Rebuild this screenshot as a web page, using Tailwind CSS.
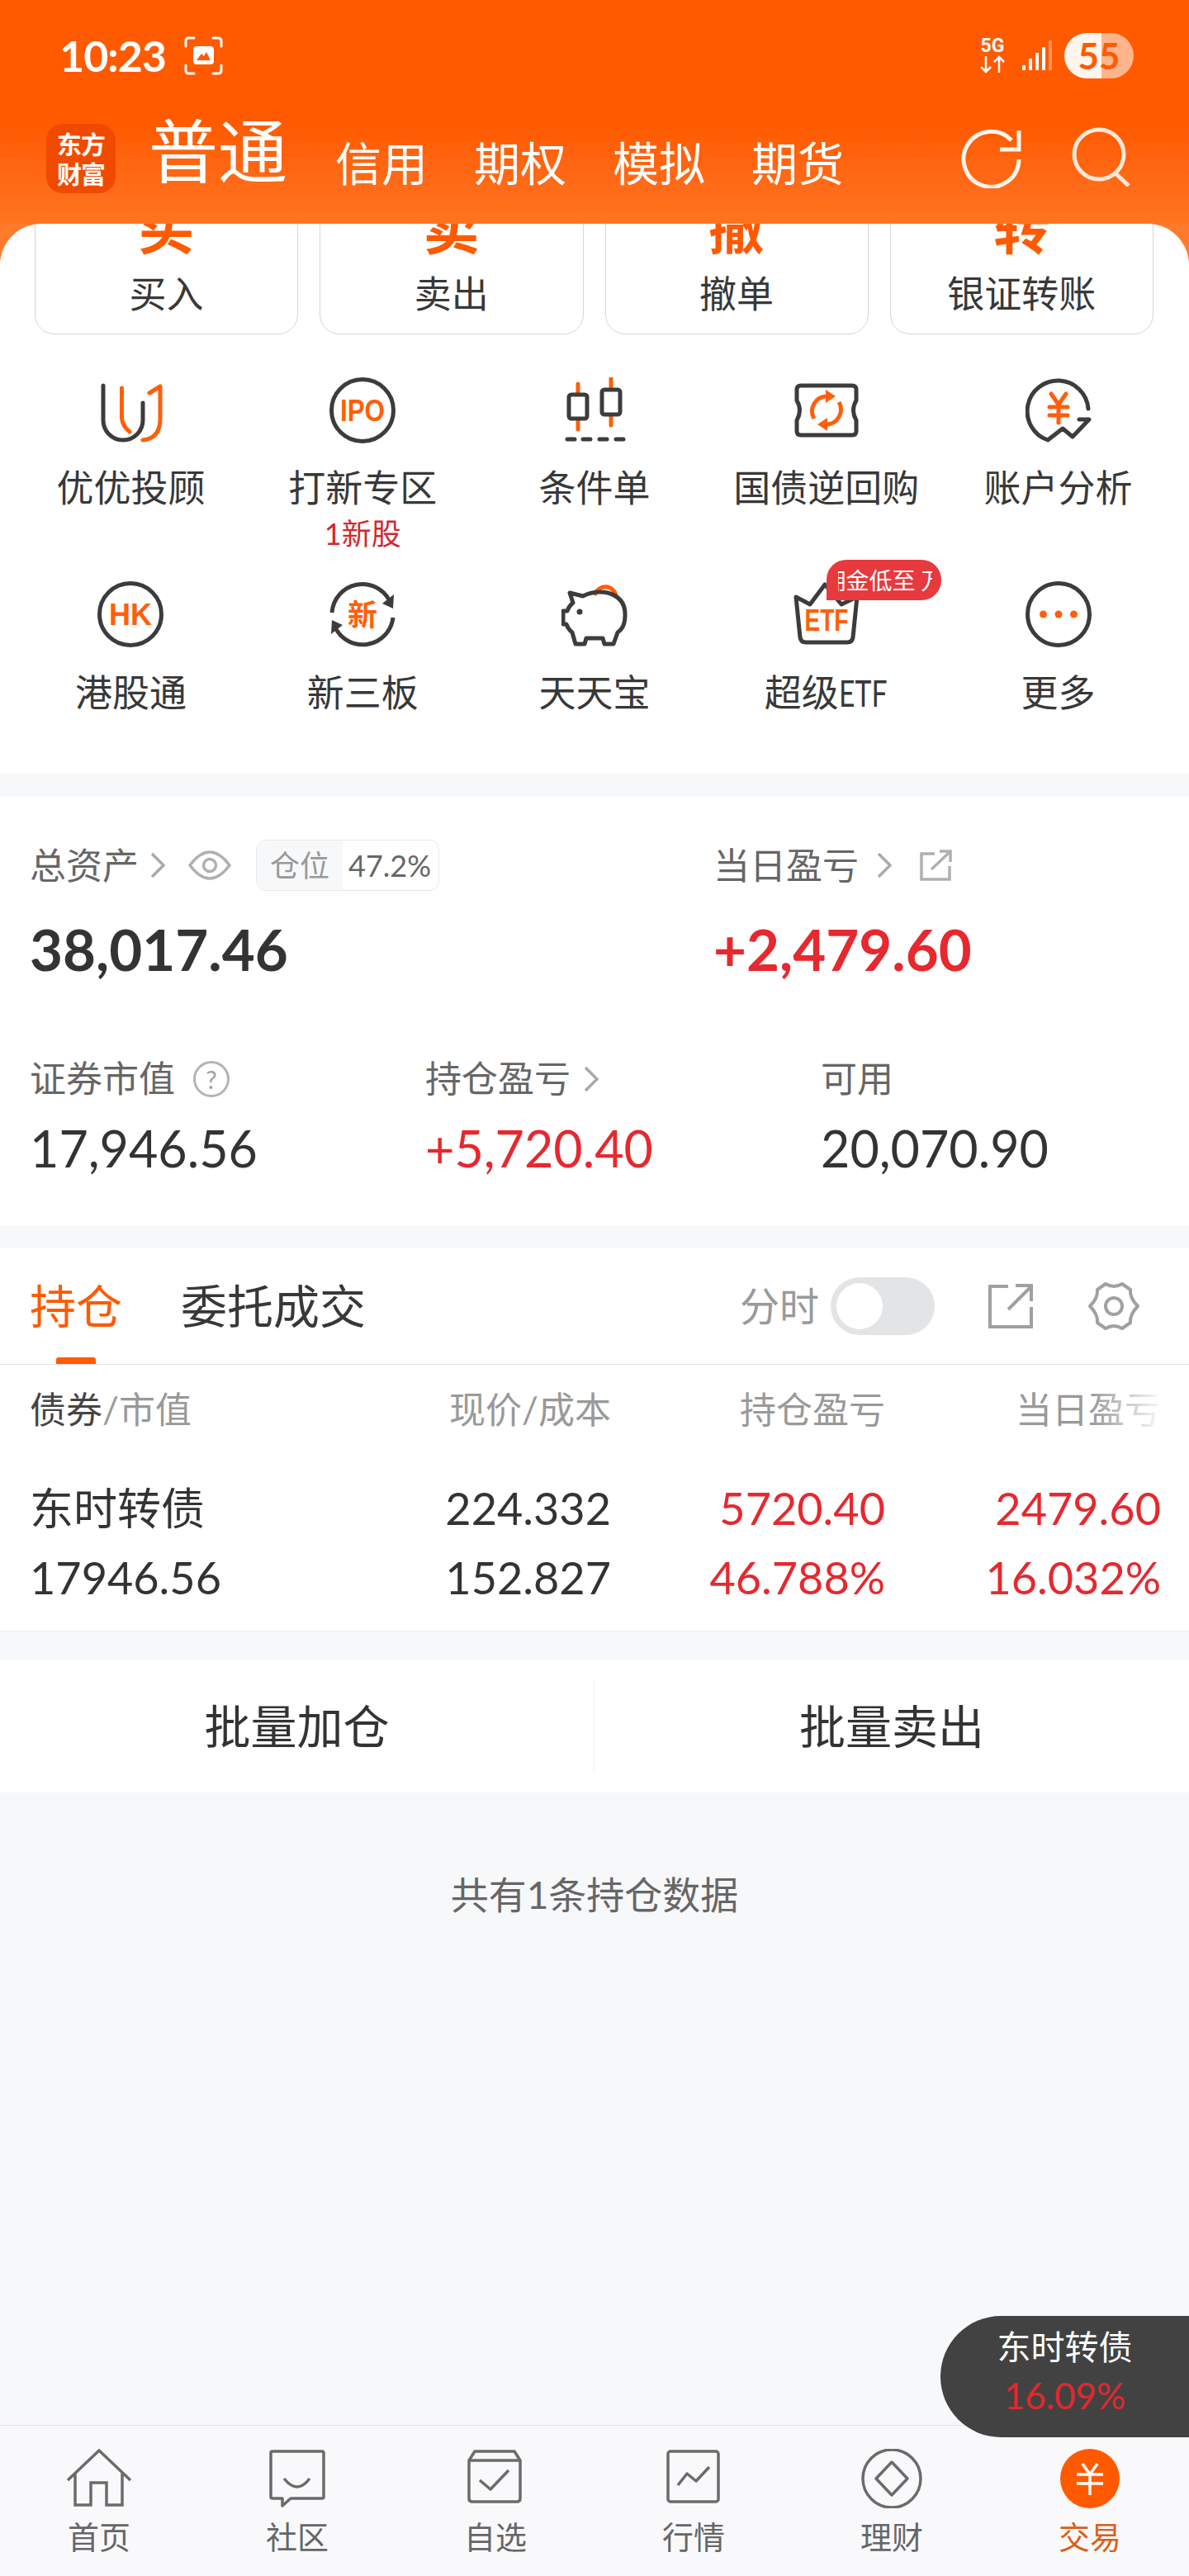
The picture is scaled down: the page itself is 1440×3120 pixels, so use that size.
<!DOCTYPE html>
<html lang="zh-CN">
  <head>
    <meta charset="UTF-8" />
    <meta name="viewport" content="width=device-width, initial-scale=1.0" />
    <title>交易</title>
    <script src="https://cdn.jsdelivr.net/npm/@tailwindcss/browser@4"></script>
  </head>
  <body>
    <div class="relative w-[1440px] h-[3120px] overflow-hidden flex flex-col bg-[#f7f8fa] text-[#383838] font-['Lato','Noto_Sans_CJK_SC',sans-serif]">
      <!-- Header -->
      <header class="relative z-10 h-[271px] shrink-0 bg-linear-to-b from-[#ff5a00] from-55% to-[#ff7420] text-white">
        <div class="h-[134px] flex items-center pl-[72px] pr-[67px]">
          <span class="text-[52px] leading-none font-bold tracking-[-1px] w-[128px]">10:23</span>
          <svg class="ml-[23px]" width="47" height="47" viewBox="0 0 47 47" fill="none" stroke="#fff" stroke-width="3" stroke-linecap="round">
            <path d="M2 12V6Q2 2 6 2H12M35 2H41Q45 2 45 6V12M45 35V41Q45 45 41 45H35M12 45H6Q2 45 2 41V35" />
            <rect x="11" y="12" width="25" height="22" rx="4" fill="#fff" stroke="none" />
            <path d="M15 29L21 21L24 24L27 19L32 29Z" fill="#ff5a00" stroke="none" />
          </svg>
          <div class="ml-auto flex flex-col items-center w-[32px]">
            <span class="text-[23px] leading-[22px] font-bold font-['Roboto',sans-serif]">5G</span>
            <svg width="32" height="22" viewBox="0 0 32 22" fill="none" stroke="#fff" stroke-width="2.5">
              <path d="M8 1V20M2 14L8 20L14 14M24 21V2M18 8L24 2L30 8" />
            </svg>
          </div>
          <svg class="ml-[19px]" width="38" height="38" viewBox="0 0 38 38" fill="#fff">
            <rect x="1" y="31" width="4" height="6" />
            <rect x="9" y="23" width="4" height="14" />
            <rect x="17" y="16" width="4" height="21" />
            <rect x="25" y="9" width="4" height="28" />
            <rect x="33" y="1" width="4" height="36" opacity="0.35" />
          </svg>
          <div class="ml-[14px] w-[84px] h-[55px] rounded-full bg-linear-to-r from-[#fff5ee] from-53% to-[#ffb48c] to-53% flex items-center justify-center text-[#ff5a00] text-[44px] leading-none font-bold">55</div>
        </div>
        <nav class="h-[116px] flex items-center pl-[56px] pr-[70px]">
          <div class="w-[84px] h-[84px] rounded-[20px] bg-[#f04a00] flex items-center justify-center text-center text-[30px] leading-[36px] font-bold tracking-[-1px]">东方<br />财富</div>
          <span class="ml-[40px] mb-[18px] text-[84px] leading-none font-normal">普通</span>
          <div class="ml-[58px] mt-[12px] flex gap-[56px] text-[56px] leading-none font-normal">
            <span>信用</span>
            <span>期权</span>
            <span>模拟</span>
            <span>期货</span>
          </div>
          <svg class="ml-auto" width="73" height="72" viewBox="0 0 73 72" fill="none" stroke="#fff3ea" stroke-width="5">
            <path d="M70 37A33.500 33.500 0 1 1 61 14" />
            <path d="M70 2V25H47" />
          </svg>
          <svg class="ml-[61px] mb-[4px]" width="72" height="72" viewBox="0 0 72 72" fill="none" stroke="#ffe8d8" stroke-width="5">
            <circle cx="33" cy="33" r="30" />
            <path d="M53 56L69 71" />
          </svg>
        </nav>
      </header>

      <main class="flex-1 flex flex-col min-h-0">
        <!-- Quick actions and menu -->
        <section class="bg-[#ff7a2a]">
          <div class="bg-white rounded-t-[50px] overflow-hidden pb-[75px]">
            <div class="grid grid-cols-4 gap-[26px] pl-[42px] pr-[43px] -mt-[20px]">
              <div class="h-[154px] rounded-[24px] border border-[#d5d5d5] flex flex-col items-center">
                <span class="-mt-[10px] text-[68px] leading-[68px] font-bold text-[#ff5a00]">买</span>
                <span class="mt-[24px] text-[45px] leading-[45px]">买入</span>
              </div>
              <div class="h-[154px] rounded-[24px] border border-[#d5d5d5] flex flex-col items-center">
                <span class="-mt-[10px] text-[68px] leading-[68px] font-bold text-[#ff5a00]">卖</span>
                <span class="mt-[24px] text-[45px] leading-[45px]">卖出</span>
              </div>
              <div class="h-[154px] rounded-[24px] border border-[#d5d5d5] flex flex-col items-center">
                <span class="-mt-[10px] text-[68px] leading-[68px] font-bold text-[#ff5a00]">撤</span>
                <span class="mt-[24px] text-[45px] leading-[45px]">撤单</span>
              </div>
              <div class="h-[154px] rounded-[24px] border border-[#d5d5d5] flex flex-col items-center">
                <span class="-mt-[10px] text-[68px] leading-[68px] font-bold text-[#ff5a00]">转</span>
                <span class="mt-[24px] text-[45px] leading-[45px]">银证转账</span>
              </div>
            </div>

            <div class="grid grid-cols-5 gap-y-[40px] px-[18px] mt-[52px] text-[45px] leading-[45px]">
              <div class="flex flex-col items-center">
                <svg width="80" height="80" viewBox="0 0 80 80" fill="none" stroke-width="5" stroke-linecap="round" stroke-linejoin="round">
                  <path d="M7 10V52A24 24 0 0 0 55 52V31" stroke="#3c3c3c" />
                  <path d="M29.500 13V48Q29.500 58 39 66" stroke="#ff5f0a" />
                  <path d="M63 19L76 11V50Q76 74 55 76" stroke="#ff5f0a" />
                </svg>
                <span class="mt-[32px]">优优投顾</span>
              </div>
              <div class="flex flex-col items-center">
                <svg width="80" height="80" viewBox="0 0 80 80" fill="none">
                  <circle cx="40" cy="40" r="37.500" stroke="#3c3c3c" stroke-width="5" />
                  <text x="40" y="53" text-anchor="middle" textLength="54" lengthAdjust="spacingAndGlyphs" font-size="36" font-weight="700" font-family="Liberation Sans" fill="#ff5f0a">IPO</text>
                </svg>
                <span class="mt-[32px]">打新专区</span>
                <span class="mt-[14px] text-[36px] leading-[36px] text-[#d0282f]">1新股</span>
              </div>
              <div class="flex flex-col items-center">
                <svg width="80" height="80" viewBox="0 0 80 80" fill="none" stroke-width="5" stroke-linecap="round" stroke-linejoin="round">
                  <path d="M20 8V63M60 1V58" stroke="#ff5f0a" />
                  <rect x="9" y="21" width="22" height="29" rx="3" fill="#fff" stroke="#3c3c3c" />
                  <rect x="49" y="15" width="22" height="30" rx="3" fill="#fff" stroke="#3c3c3c" />
                  <path d="M7 75H16M26 75H35M46 75H55M66 75H75" stroke="#3c3c3c" />
                </svg>
                <span class="mt-[32px]">条件单</span>
              </div>
              <div class="flex flex-col items-center">
                <svg width="80" height="80" viewBox="0 0 80 80" fill="none" stroke-width="5" stroke-linejoin="round">
                  <path d="M9 10H71Q76 10 76 15V28Q69 40 76 52V65Q76 70 71 70H9Q4 70 4 65V52Q11 40 4 28V15Q4 10 9 10Z" stroke="#3c3c3c" />
                  <path d="M25 50A18 18 0 0 1 41 23M55 30A18 18 0 0 1 39 57" stroke="#ff5f0a" />
                  <path d="M39 15L51 23L39 31ZM41 49L29 57L41 65Z" fill="#ff5f0a" />
                </svg>
                <span class="mt-[32px]">国债逆回购</span>
              </div>
              <div class="flex flex-col items-center">
                <svg width="80" height="80" viewBox="0 0 80 80" fill="none" stroke-width="5" stroke-linecap="round" stroke-linejoin="round">
                  <path d="M76 38A37 37 0 1 0 27 76L45 62L57 72L77 51H65" stroke="#3c3c3c" />
                  <path d="M31 20L40 33L49 20M29 36H51M29 46H51M40 33V55" stroke="#ff5f0a" />
                </svg>
                <span class="mt-[32px]">账户分析</span>
              </div>

              <div class="flex flex-col items-center">
                <svg width="80" height="80" viewBox="0 0 80 80" fill="none">
                  <circle cx="40" cy="40" r="37.500" stroke="#3c3c3c" stroke-width="5" />
                  <text x="40" y="53" text-anchor="middle" textLength="52" lengthAdjust="spacingAndGlyphs" font-size="36" font-weight="700" font-family="Liberation Sans" fill="#ff5f0a">HK</text>
                </svg>
                <span class="mt-[33px]">港股通</span>
              </div>
              <div class="flex flex-col items-center">
                <svg width="80" height="80" viewBox="0 0 80 80" fill="none" stroke="#3c3c3c" stroke-width="5">
                  <path d="M3 38A37 37 0 0 1 73 24M77 44A37 37 0 0 1 7 56" />
                  <path d="M78 16L77 33L64 27ZM2 64L3 47L16 53Z" fill="#3c3c3c" stroke="none" />
                  <text x="40" y="54" text-anchor="middle" font-size="36" font-weight="700" font-family="Noto Sans CJK SC" fill="#ff5f0a" stroke="none">新</text>
                </svg>
                <span class="mt-[33px]">新三板</span>
              </div>
              <div class="flex flex-col items-center">
                <svg width="80" height="80" viewBox="0 0 80 80" fill="none" stroke-width="5" stroke-linejoin="round" stroke-linecap="round">
                  <path d="M41 15A13 13 0 0 1 66 18" stroke="#ff5f0a" />
                  <path d="M10 14L26 18Q40 11 56 14Q78 20 77 42Q77 56 68 62L63 76H52L50 69H30L28 76H17L13 62Q8 58 6 52H2V36H7Q9 30 14 26Z" stroke="#3c3c3c" />
                  <circle cx="22" cy="37" r="3.500" fill="#3c3c3c" />
                </svg>
                <span class="mt-[33px]">天天宝</span>
              </div>
              <div class="flex flex-col items-center relative">
                <svg width="80" height="80" viewBox="0 0 80 80" fill="none" stroke-width="5" stroke-linejoin="round">
                  <path d="M3 19L20 28L38 4L58 28L77 19L72 68Q71 74 65 74H15Q9 74 8 68Z" stroke="#3c3c3c" />
                  <text x="40" y="60" text-anchor="middle" textLength="53" lengthAdjust="spacingAndGlyphs" font-size="37" font-weight="700" font-family="Liberation Sans" fill="#ff5f0a">ETF</text>
                </svg>
                <span class="mt-[33px] whitespace-nowrap">超级<span class="inline-block w-[60px] origin-left scale-x-75">ETF</span></span>
                <div class="absolute left-[141px] -top-[26px] w-[139px] h-[49px] rounded-[24px] rounded-bl-none bg-[#e63a3f] pl-[14px] pr-[11px] flex items-center">
                  <div class="w-full overflow-hidden whitespace-nowrap text-[28px] leading-[30px] text-white">
                    <span class="-ml-[19px] inline-block">佣金低至 万</span>
                  </div>
                </div>
              </div>
              <div class="flex flex-col items-center">
                <svg width="80" height="80" viewBox="0 0 80 80" fill="none">
                  <circle cx="40" cy="40" r="37.500" stroke="#3c3c3c" stroke-width="5" />
                  <circle cx="21.500" cy="40" r="4.500" fill="#ff5f0a" />
                  <circle cx="40" cy="40" r="4.500" fill="#ff5f0a" />
                  <circle cx="58.500" cy="40" r="4.500" fill="#ff5f0a" />
                </svg>
                <span class="mt-[33px]">更多</span>
              </div>
            </div>
          </div>
        </section>

        <!-- Assets -->
        <section class="mt-[28px] bg-white pt-[52px] pb-[63px] pl-[36px]">
          <div class="grid grid-cols-[828px_1fr] items-start">
            <div>
              <div class="h-[62px] flex items-center text-[44px] leading-[45px] text-[#666]">
                <span>总资产</span>
                <svg class="ml-[14px]" width="18" height="32" viewBox="0 0 18 32" fill="none" stroke="#aaa" stroke-width="3.500"><path d="M2 2L16 16L2 30" /></svg>
                <svg class="ml-[28px]" width="52" height="36" viewBox="0 0 52 36" fill="none" stroke="#b0b0b0" stroke-width="3.500"><path d="M2 18Q14 2 26 2Q38 2 50 18Q38 34 26 34Q14 34 2 18Z" /><circle cx="26" cy="18" r="7.500" /></svg>
                <div class="ml-[30px] h-[62px] w-[222px] rounded-[12px] border border-[#e8e8e8] overflow-hidden flex items-center text-[36px] leading-none">
                  <span class="h-full w-[104px] bg-[#f7f8fa] flex items-center justify-center text-[#999]">仓位</span>
                  <span class="ml-[7px] text-[#666] font-normal">47.2%</span>
                </div>
              </div>
              <div class="mt-[36px] text-[69px] leading-[70px] font-bold text-[#333]">38,017.46</div>
            </div>
            <div>
              <div class="h-[62px] flex items-center text-[44px] leading-[45px] text-[#666]">
                <span>当日盈亏</span>
                <svg class="ml-[22px]" width="18" height="32" viewBox="0 0 18 32" fill="none" stroke="#aaa" stroke-width="3.500"><path d="M2 2L16 16L2 30" /></svg>
                <svg class="ml-[34px]" width="39" height="38" viewBox="0 0 39 38" fill="none" stroke="#b0b0b0" stroke-width="3.500"><path d="M18 5H2V36H36V20M14 24L36 3M24 2H37V15" /></svg>
              </div>
              <div class="mt-[36px] text-[69px] leading-[70px] font-bold text-[#e6282f]">+2,479.60</div>
            </div>
          </div>
          <div class="mt-[99px] grid grid-cols-3 w-[1437px]">
            <div>
              <div class="h-[45px] flex items-center text-[44px] leading-[45px] text-[#666]">
                <span>证券市值</span>
                <span class="ml-[22px] w-[44px] h-[44px] rounded-full border-[3px] border-[#b4b4b4] flex items-center justify-center text-[30px] leading-none text-[#a0a0a0]">?</span>
              </div>
              <div class="mt-[32px] text-[61px] leading-[60px] text-[#333]">17,946.56</div>
            </div>
            <div>
              <div class="h-[45px] flex items-center text-[44px] leading-[45px] text-[#666]">
                <span>持仓盈亏</span>
                <svg class="ml-[16px]" width="18" height="32" viewBox="0 0 18 32" fill="none" stroke="#aaa" stroke-width="3.500"><path d="M2 2L16 16L2 30" /></svg>
              </div>
              <div class="mt-[32px] text-[61px] leading-[60px] text-[#e6282f]">+5,720.40</div>
            </div>
            <div>
              <div class="h-[45px] flex items-center text-[44px] leading-[45px] text-[#666]">可用</div>
              <div class="mt-[32px] text-[61px] leading-[60px] text-[#333]">20,070.90</div>
            </div>
          </div>
        </section>

        <!-- Positions -->
        <section class="mt-[28px] bg-white border-b border-[#ececec]">
          <div class="h-[141px] border-b border-[#e2e2e2] flex items-center pl-[36px] pr-[59px]">
            <span class="relative text-[56px] leading-[56px] text-[#ff5a00]">
              持仓
              <span class="absolute left-[32px] -bottom-[42px] w-[48px] h-[8px] rounded-t-[3px] bg-[#ff5a00]"></span>
            </span>
            <span class="ml-[71px] text-[56px] leading-[56px]">委托成交</span>
            <span class="ml-auto text-[48px] leading-[48px] text-[#999]">分时</span>
            <div class="ml-[14px] w-[126px] h-[70px] rounded-full bg-[#e3e4e6] p-[7px]">
              <div class="w-[56px] h-[56px] rounded-full bg-white"></div>
            </div>
            <svg class="ml-[65px]" width="54" height="54" viewBox="0 0 54 54" fill="none" stroke="#a0a0a0" stroke-width="4"><path d="M24 3H2V52H52V28M24 31L52 3M33 2H52V21" /></svg>
            <svg class="ml-[66px]" width="64" height="62" viewBox="0 0 64 62" fill="none" stroke="#a0a0a0" stroke-width="4" stroke-linejoin="round">
              <path d="M22 4Q32 10 42 4L52 11Q51 21 61 31Q51 41 52 51L42 58Q32 52 22 58L12 51Q13 41 3 31Q13 21 12 11Z" />
              <circle cx="32" cy="31" r="10" />
            </svg>
          </div>
          <div class="relative pl-[36px] pt-[32px] pb-[36px]">
            <div class="grid grid-cols-[464px_240px_332px_334px] text-right text-[44px] leading-[45px] text-[#999]">
              <span class="text-left"><span class="text-[#444]">债券</span>/市值</span>
              <span>现价/成本</span>
              <span>持仓盈亏</span>
              <span>当日盈亏</span>
            </div>
            <div class="absolute right-[28px] top-[28px] w-[90px] h-[50px] bg-linear-to-r from-white/0 to-white"></div>
            <div class="mt-[69px] grid grid-cols-[464px_240px_332px_334px] gap-y-[28px] text-right text-[54px] leading-[56px] text-[#333]">
              <span class="text-left text-[53px]">东时转债</span>
              <span>224.332</span>
              <span class="text-[#e6282f]">5720.40</span>
              <span class="text-[#e6282f]">2479.60</span>
              <span class="text-left">17946.56</span>
              <span>152.827</span>
              <span class="text-[#e6282f]">46.788%</span>
              <span class="text-[#e6282f]">16.032%</span>
            </div>
          </div>
        </section>

        <div class="mt-[35px] h-[160px] bg-white grid grid-cols-2 items-center text-center text-[56px] leading-[56px] text-[#333]">
          <span class="border-r border-[#eee] h-[110px] flex items-center justify-center">批量加仓</span>
          <span>批量卖出</span>
        </div>
        <p class="mt-[101px] text-center text-[46px] leading-[45px] text-[#666]">共有1条持仓数据</p>
      </main>

      <!-- Floating stock pill -->
      <div class="absolute z-20 right-0 top-[2805px] w-[301px] h-[147px] rounded-l-[74px] bg-[#424242] pt-[16px] flex flex-col items-center">
        <span class="text-[41px] leading-[44px] text-white">东时转债</span>
        <span class="mt-[14px] text-[44px] leading-[44px] text-[#e0282e]">16.09%</span>
      </div>

      <!-- Bottom nav -->
      <footer class="h-[183px] shrink-0 border-t border-[#e6e6e8] bg-[#f9f9fb] pt-[28px] grid grid-cols-6 text-[38px] leading-[38px] text-[#666]">
        <div class="flex flex-col items-center">
          <svg width="80" height="72" viewBox="0 0 80 72" fill="none" stroke="#6b6b6b" stroke-width="3.500">
            <path d="M2 38L40 2L78 38M11 29V68H30V41H49V68H68V29" />
          </svg>
          <span class="mt-[15px]">首页</span>
        </div>
        <div class="flex flex-col items-center">
          <svg width="80" height="72" viewBox="0 0 80 72" fill="none" stroke="#6b6b6b" stroke-width="3.500" stroke-linejoin="round">
            <path d="M10 3H70Q72 3 72 5V58Q72 60 70 60H32L22 69V60H10Q8 60 8 58V5Q8 3 10 3Z" />
            <path d="M24 36Q40 56 55 36" />
          </svg>
          <span class="mt-[15px]">社区</span>
        </div>
        <div class="flex flex-col items-center">
          <svg width="80" height="72" viewBox="0 0 80 72" fill="none" stroke="#6b6b6b" stroke-width="3.500" stroke-linejoin="round">
            <path d="M8 14L15 3H63L70 14V60Q70 64 66 64H12Q8 64 8 60Z" />
            <path d="M8 14H70M21 38L34 49L56 26" />
          </svg>
          <span class="mt-[15px]">自选</span>
        </div>
        <div class="flex flex-col items-center">
          <svg width="80" height="72" viewBox="0 0 80 72" fill="none" stroke="#6b6b6b" stroke-width="3.500" stroke-linejoin="round">
            <rect x="9" y="3" width="61" height="61" rx="3" />
            <path d="M21 44L32 30L43 39L59 22" />
          </svg>
          <span class="mt-[15px]">行情</span>
        </div>
        <div class="flex flex-col items-center">
          <svg width="80" height="72" viewBox="0 0 80 72" fill="none" stroke="#6b6b6b" stroke-width="3.500" stroke-linejoin="round">
            <circle cx="40" cy="36" r="35" />
            <path d="M40 16L59 36L40 56L21 36Z" />
          </svg>
          <span class="mt-[15px]">理财</span>
        </div>
        <div class="flex flex-col items-center text-[#d9601a]">
          <svg width="80" height="72" viewBox="0 0 80 72" fill="none" stroke="#fff" stroke-width="3.500">
            <circle cx="40" cy="36" r="36" fill="#ff5a00" stroke="none" />
            <path d="M31 18L40 31L49 18M24 31H56M24 42H56M40 31V56" />
          </svg>
          <span class="mt-[15px]">交易</span>
        </div>
      </footer>
    </div>
  </body>
</html>
